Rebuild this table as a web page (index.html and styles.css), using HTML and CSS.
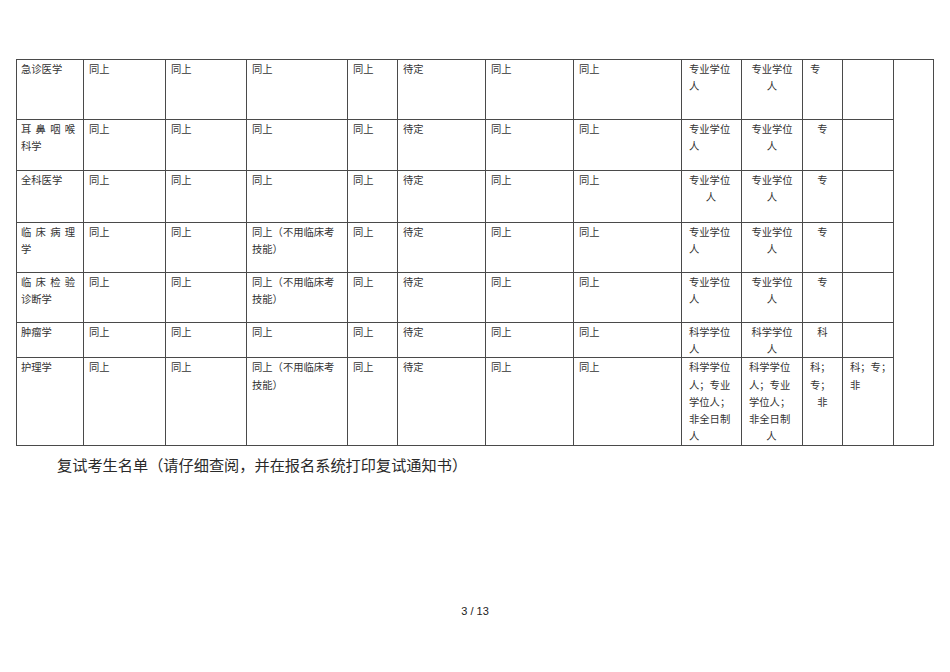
FILE: index.html
```html
<!DOCTYPE html>
<html lang="zh">
<head>
<meta charset="utf-8">
<title>复试考生名单</title>
<link rel="stylesheet" href="styles.css">
</head>
<body>
<div class="page">
  <table class="grid">
    <colgroup>
      <col class="c1"><col class="c2"><col class="c3"><col class="c4"><col class="c5"><col class="c6"><col class="c7"><col class="c8"><col class="c9"><col class="c10"><col class="c11"><col class="c12"><col class="c13">
    </colgroup>
    <tr class="r1">
      <td class="name">急诊医学</td>
      <td>同上</td><td>同上</td><td>同上</td><td>同上</td><td>待定</td><td>同上</td><td>同上</td>
      <td class="deg">专业学位<br>人</td>
      <td class="deg ctr">专业学位<br>人</td>
      <td class="sm">专</td>
      <td class="sm2"></td>
      <td class="tail" rowspan="7"></td>
    </tr>
    <tr class="r2">
      <td class="name"><span class="jl">耳鼻咽喉</span>科学</td>
      <td>同上</td><td>同上</td><td>同上</td><td>同上</td><td>待定</td><td>同上</td><td>同上</td>
      <td class="deg">专业学位<br>人</td>
      <td class="deg ctr">专业学位<br>人</td>
      <td class="sm ctr">专</td>
      <td class="sm2"></td>
    </tr>
    <tr class="r3">
      <td class="name">全科医学</td>
      <td>同上</td><td>同上</td><td>同上</td><td>同上</td><td>待定</td><td>同上</td><td>同上</td>
      <td class="deg">专业学位<br><span class="cb">人</span></td>
      <td class="deg ctr">专业学位<br>人</td>
      <td class="sm ctr">专</td>
      <td class="sm2"></td>
    </tr>
    <tr class="r4">
      <td class="name"><span class="jl">临床病理</span>学</td>
      <td>同上</td><td>同上</td><td>同上（不用临床考<br>技能）</td><td>同上</td><td>待定</td><td>同上</td><td>同上</td>
      <td class="deg">专业学位<br>人</td>
      <td class="deg ctr">专业学位<br>人</td>
      <td class="sm ctr">专</td>
      <td class="sm2"></td>
    </tr>
    <tr class="r5">
      <td class="name"><span class="jl">临床检验</span>诊断学</td>
      <td>同上</td><td>同上</td><td>同上（不用临床考<br>技能）</td><td>同上</td><td>待定</td><td>同上</td><td>同上</td>
      <td class="deg">专业学位<br>人</td>
      <td class="deg ctr">专业学位<br>人</td>
      <td class="sm ctr">专</td>
      <td class="sm2"></td>
    </tr>
    <tr class="r6">
      <td class="name">肿瘤学</td>
      <td>同上</td><td>同上</td><td>同上</td><td>同上</td><td>待定</td><td>同上</td><td>同上</td>
      <td class="deg">科学学位<br>人</td>
      <td class="deg ctr">科学学位<br>人</td>
      <td class="sm ctr">科</td>
      <td class="sm2"></td>
    </tr>
    <tr class="r7">
      <td class="name">护理学</td>
      <td>同上</td><td>同上</td><td>同上（不用临床考<br>技能）</td><td>同上</td><td>待定</td><td>同上</td><td>同上</td>
      <td class="deg">科学学位<br>人；专业<br>学位人；<br>非全日制<br>人</td>
      <td class="deg">科学学位<br>人；专业<br>学位人；<br>非全日制<br><span class="cb">人</span></td>
      <td class="sm">科；<br>专；<br><span class="cb">非</span></td>
      <td class="sm2">科；专；<br>非</td>
    </tr>
  </table>
  <p class="title">复试考生名单（请仔细查阅，并在报名系统打印复试通知书）</p>
  <p class="pageno">3 / 13</p>
</div>
</body>
</html>
```

FILE: styles.css
```css
html, body {
  margin: 0;
  padding: 0;
  background: #ffffff;
}

.page {
  width: 950px;
  height: 672px;
  padding-top: 59px;
  box-sizing: border-box;
  font-family: "Noto Sans CJK SC", "Noto Sans", sans-serif;
  color: #333333;
}

.grid {
  margin-left: 16px;
  border-collapse: collapse;
  table-layout: fixed;
  width: 918px;
  font-size: 10.3px;
  line-height: 17.2px;
}

.c1 { width: 67px; }
.c2 { width: 82px; }
.c3 { width: 81px; }
.c4 { width: 101px; }
.c5 { width: 50px; }
.c6 { width: 88px; }
.c7 { width: 88px; }
.c8 { width: 108px; }
.c9 { width: 60px; }
.c10 { width: 61px; }
.c11 { width: 40px; }
.c12 { width: 51px; }
.c13 { width: 40px; }

.grid td {
  border: 1px solid #4a4a4a;
  vertical-align: top;
  padding: 0 3px 0 5px;
  white-space: nowrap;
  overflow: hidden;
}

.r1 { height: 60px; }
.r2 { height: 51px; }
.r3 { height: 52px; }
.r4 { height: 50px; }
.r5 { height: 50px; }
.r6 { height: 34px; }
.r7 { height: 88px; }

.grid td.name {
  padding-left: 4px;
  padding-right: 8px;
}

.jl {
  display: block;
  text-align: justify;
  text-align-last: justify;
}

.grid td.deg {
  padding-left: 7px;
}

.grid td.ctr {
  text-align: center;
  padding-left: 2px;
  padding-right: 2px;
}

.grid td.sm {
  padding-left: 7px;
  padding-right: 2px;
}

.grid td.sm.ctr {
  padding-left: 2px;
}

.grid td.sm2 {
  padding-left: 7px;
}

.cb {
  display: block;
  text-align: center;
  margin-left: -5px;
}

.title {
  margin: 6px 0 0 57px;
  font-size: 15.2px;
  line-height: 24px;
  color: #2a2a2a;
}

.pageno {
  margin: 129px 0 0 0;
  text-align: center;
  font-family: "Liberation Sans", Arial, sans-serif;
  font-size: 11px;
  color: #222;
}
```
